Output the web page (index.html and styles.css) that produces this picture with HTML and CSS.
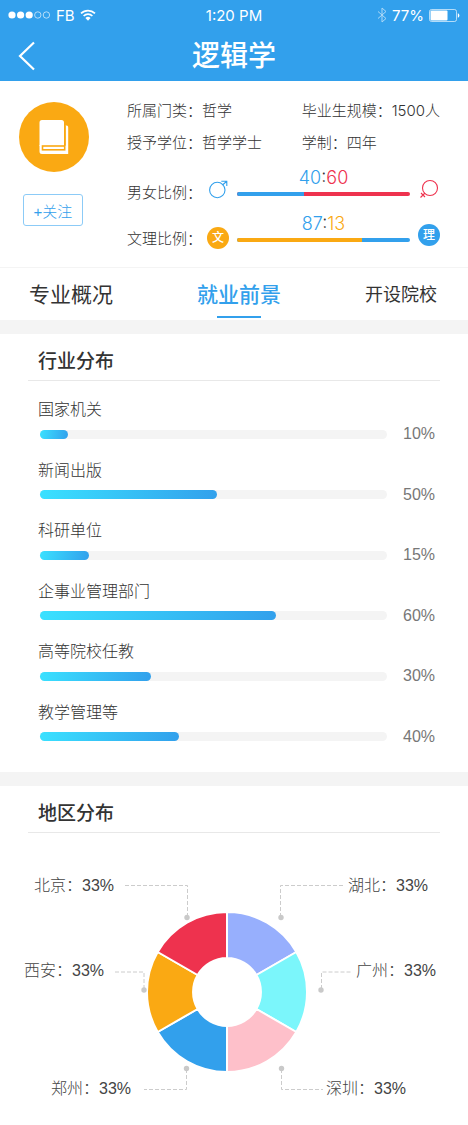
FILE: index.html
```html
<!DOCTYPE html>
<html lang="zh-CN">
<head>
  <meta charset="UTF-8">
  <meta name="viewport" content="width=device-width, initial-scale=1.0">
  <title>逻辑学</title>
  <link rel="stylesheet" href="styles.css">
</head>
<body>
  <header class="header">
    <div class="status-bar">
      <div class="status-left">
        <svg width="43" height="10" viewBox="0 0 43 10" aria-hidden="true">
          <g fill="#fff">
            <circle cx="4" cy="5" r="3.6"/>
            <circle cx="12.6" cy="5" r="3.6"/>
            <circle cx="21.2" cy="5" r="3.6"/>
          </g>
          <g fill="none" stroke="#fff" stroke-width="0.8" opacity="0.8">
            <circle cx="29.8" cy="5" r="3.2"/>
            <circle cx="38.4" cy="5" r="3.2"/>
          </g>
        </svg>
        <span>FB</span>
        <svg width="16" height="12" viewBox="0 0 16 12" aria-hidden="true">
          <g fill="none" stroke="#fff" stroke-width="1.7">
            <path d="M1 4.4a10 10 0 0 1 14 0"/>
            <path d="M3.6 7a6.3 6.3 0 0 1 8.8 0"/>
          </g>
          <path d="M5.4 9a3.7 3.7 0 0 1 5.2 0L8 11.7z" fill="#fff"/>
        </svg>
      </div>
      <span>1:20 PM</span>
      <div class="status-right">
        <svg class="bluetooth" width="10" height="16" viewBox="0 0 10 16" aria-hidden="true">
          <path d="M1 4.5l8 7-4 3.5V1l4 3.5-8 7" fill="none" stroke="#fff" stroke-width="1"/>
        </svg>
        <span>77%</span>
        <svg width="31" height="13" viewBox="0 0 31 13" aria-hidden="true">
          <rect x="0.5" y="0.5" width="27" height="12" rx="2" fill="none" stroke="#fff" stroke-width="0.8" opacity="0.8"/>
          <rect x="1.5" y="1.5" width="17" height="10" rx="1" fill="#fff"/>
          <path d="M28.8 4.3q1.6.5 1.6 2.2t-1.6 2.2z" fill="#fff"/>
        </svg>
      </div>
    </div>
    <div class="title-bar">
      <button type="button" class="back" aria-label="返回">
        <svg width="18" height="30" viewBox="0 0 18 30">
          <path d="M16 1.5L2 15l14 13.5" fill="none" stroke="#fff" stroke-width="2.2"/>
        </svg>
      </button>
      <h1>逻辑学</h1>
    </div>
  </header>

  <!-- Major summary -->
  <section class="profile">
    <div class="profile-side">
      <div class="avatar">
        <svg width="30" height="36" viewBox="0 0 30 36" aria-hidden="true">
          <path d="M3 1H22.500a2.500 2.500 0 0 1 2.500 2.500V27H0.500V3.500A2.500 2.500 0 0 1 3 1z" fill="#fff"/>
          <path d="M0.500 26H26.700V6.500a2 2 0 0 1 2.500 2V35H3a2.500 2.500 0 0 1-2.500-2.500z" fill="#fff"/>
          <rect x="3.500" y="27" width="22.200" height="3.800" fill="#fff" stroke="#faa913" stroke-width="1.600"/>
          <path d="M25.800 7V27" fill="none" stroke="#faa913" stroke-width="1.600"/>
        </svg>
      </div>
      <button type="button" class="follow">+关注</button>
    </div>
    <div class="profile-main">
      <div class="facts">
        <p>所属门类：哲学</p>
        <p>毕业生规模：1500人</p>
        <p>授予学位：哲学学士</p>
        <p>学制：四年</p>
      </div>
      <div class="ratio">
        <span class="ratio-label">男女比例：</span>
        <svg class="ratio-icon low" viewBox="0 0 22 22" aria-hidden="true">
          <g fill="none" stroke="#32a0ec" stroke-width="1.100">
            <circle cx="10.300" cy="9" r="7.700"/>
            <path d="M15.500 4L19.500 0.500M14.300 0.300H19.800V5"/>
          </g>
        </svg>
        <div class="ratio-meter">
          <p><span class="blue">40</span>:<span class="red">60</span></p>
          <div class="ratio-bar bg-red"><div class="bg-blue" style="width: 39%"></div></div>
        </div>
        <svg class="ratio-icon" viewBox="0 0 22 22" aria-hidden="true">
          <g fill="none" stroke="#ee324e" stroke-width="1.100">
            <circle cx="12" cy="10" r="7.500"/>
            <path d="M7 15L2.500 19.500M3 15l4 4"/>
          </g>
        </svg>
      </div>
      <div class="ratio">
        <span class="ratio-label">文理比例：</span>
        <span class="ratio-icon badge low bg-orange">文</span>
        <div class="ratio-meter">
          <p><span class="blue">87</span>:<span class="orange">13</span></p>
          <div class="ratio-bar bg-blue"><div class="bg-orange" style="width: 72%"></div></div>
        </div>
        <span class="ratio-icon badge bg-blue">理</span>
      </div>
    </div>
  </section>

  <nav class="tabs">
    <a href="#">专业概况</a>
    <a href="#" class="active">就业前景</a>
    <a href="#" class="small">开设院校</a>
  </nav>

  <!-- Industries -->
  <section class="panel">
    <h2>行业分布</h2>
    <ul class="industries">
      <li>
        <span class="name">国家机关</span>
        <div class="track"><div class="fill" style="width: 8%"></div></div>
        <span class="percent">10%</span>
      </li>
      <li>
        <span class="name">新闻出版</span>
        <div class="track"><div class="fill" style="width: 51%"></div></div>
        <span class="percent">50%</span>
      </li>
      <li>
        <span class="name">科研单位</span>
        <div class="track"><div class="fill" style="width: 14%"></div></div>
        <span class="percent">15%</span>
      </li>
      <li>
        <span class="name">企事业管理部门</span>
        <div class="track"><div class="fill" style="width: 68%"></div></div>
        <span class="percent">60%</span>
      </li>
      <li>
        <span class="name">高等院校任教</span>
        <div class="track"><div class="fill" style="width: 32%"></div></div>
        <span class="percent">30%</span>
      </li>
      <li>
        <span class="name">教学管理等</span>
        <div class="track"><div class="fill" style="width: 40%"></div></div>
        <span class="percent">40%</span>
      </li>
    </ul>
  </section>

  <!-- Regions -->
  <section class="panel">
    <h2>地区分布</h2>
    <svg class="donut" viewBox="0 0 468 292" role="img" aria-label="地区分布">
      <g transform="translate(227 159)" stroke="#fff" stroke-width="2">
        <path d="M0-80A80 80 0 0 1 69.300-40L29.400-17A34 34 0 0 0 0-34z" fill="#97affd"/>
        <path d="M69.300-40A80 80 0 0 1 69.300 40L29.400 17A34 34 0 0 0 29.400-17z" fill="#7bf6fb"/>
        <path d="M69.300 40A80 80 0 0 1 0 80V34A34 34 0 0 0 29.400 17z" fill="#fec0ca"/>
        <path d="M0 80A80 80 0 0 1-69.300 40L-29.400 17A34 34 0 0 0 0 34z" fill="#32a0ec"/>
        <path d="M-69.300 40A80 80 0 0 1-69.300-40L-29.400-17A34 34 0 0 0-29.400 17z" fill="#faa913"/>
        <path d="M-69.300-40A80 80 0 0 1 0-80V-34A34 34 0 0 0-29.400-17z" fill="#ee324e"/>
      </g>
      <g class="leaders">
        <path d="M187.500 84V52.500H124"/>
        <path d="M144 156V139H113"/>
        <path d="M186.500 236V256.500H144"/>
        <path d="M280.500 84V52.500H344"/>
        <path d="M321.500 156V139H352"/>
        <path d="M281.500 236V256.500H323"/>
      </g>
      <g fill="#c9c9c9">
        <circle cx="187" cy="84.500" r="2.700"/>
        <circle cx="144" cy="157" r="2.700"/>
        <circle cx="186.500" cy="235.500" r="2.700"/>
        <circle cx="281" cy="84.500" r="2.700"/>
        <circle cx="321" cy="157" r="2.700"/>
        <circle cx="281.500" cy="235.500" r="2.700"/>
      </g>
      <g class="regions">
        <text x="34" y="58">北京：33%</text>
        <text x="24" y="143">西安：33%</text>
        <text x="51" y="261">郑州：33%</text>
        <text x="348" y="58">湖北：33%</text>
        <text x="356" y="143">广州：33%</text>
        <text x="326" y="261">深圳：33%</text>
      </g>
    </svg>
  </section>
</body>
</html>
```

FILE: styles.css
```css
* {
  box-sizing: border-box;
}

body {
  margin: 0;
  background: #fff;
  color: #333;
  font-family: "Liberation Sans", "Noto Sans CJK SC", sans-serif;
  font-size: 16px;
  font-weight: 300;
}

h1, h2, p, ul {
  margin: 0;
  padding: 0;
}

svg {
  display: block;
}

button {
  font-family: inherit;
  cursor: pointer;
}

.header {
  background: #32a0ec;
  color: #fff;
}

.status-bar {
  display: grid;
  grid-template-columns: 1fr auto 1fr;
  align-items: center;
  height: 30px;
  padding: 0 8px;
  font-family: Inter, sans-serif;
  font-size: 15px;
  font-weight: 400;
}

.status-left, .status-right {
  display: flex;
  align-items: center;
  gap: 5px;
}

.status-right {
  justify-content: flex-end;
}

.bluetooth {
  opacity: 0.6;
}

.title-bar {
  display: grid;
  grid-template-columns: 36px 1fr 36px;
  align-items: center;
  height: 51px;
  padding: 0 18px;
}

.back {
  padding: 0;
  border: none;
  background: none;
}

.title-bar h1 {
  padding-top: 3px;
  font-size: 28px;
  font-weight: 500;
  line-height: 40px;
  text-align: center;
}

/* Profile */
.profile {
  display: flex;
  padding: 20px 28px 18px 19px;
  border-bottom: 1px solid #f4f4f4;
}

.profile-side {
  flex: 0 0 108px;
}

.avatar {
  display: flex;
  align-items: center;
  justify-content: center;
  width: 70px;
  height: 70px;
  margin-top: 1px;
  border-radius: 50%;
  background: #faa913;
}

.follow {
  width: 60px;
  height: 32px;
  margin: 22px 0 0 4px;
  padding: 0;
  border: 1px solid #8ccbf7;
  border-radius: 3px;
  background: #fff;
  color: #32a0ec;
  font-size: 15px;
  font-weight: 300;
}

.profile-main {
  flex: 1;
  font-family: Inter, "Noto Sans CJK SC", sans-serif;
  font-size: 15px;
  line-height: 20px;
}

.facts {
  display: grid;
  grid-template-columns: 1fr auto;
  row-gap: 12px;
  padding-bottom: 15px;
  white-space: nowrap;
}

.ratio {
  display: flex;
  height: 35px;
  margin-bottom: 11px;
}

.ratio:last-child {
  margin-bottom: 0;
}

.ratio-label {
  width: 80px;
  align-self: flex-end;
}

.ratio-icon {
  width: 22px;
  height: 22px;
  margin-top: 10px;
  overflow: visible;
}

.low {
  align-self: flex-end;
}

.badge {
  border-radius: 50%;
  color: #fff;
  font-size: 12px;
  font-weight: 500;
  line-height: 22px;
  text-align: center;
}

.ratio-meter {
  flex: 1;
  margin: 0 8px;
}

.ratio-meter p {
  font-size: 18px;
  text-align: center;
}

.ratio-bar {
  height: 4px;
  margin-top: 4px;
  border-radius: 2px;
  overflow: hidden;
}

.ratio-bar div {
  height: 100%;
}

.blue { color: #32a0ec; }
.red { color: #ee324e; }
.orange { color: #faa913; }
.bg-blue { background: #32a0ec; }
.bg-red { background: #ee324e; }
.bg-orange { background: #faa913; }

/* Tabs */
.tabs {
  display: flex;
  justify-content: space-between;
  height: 52px;
  padding: 0 31px 0 29px;
}

.tabs a {
  position: relative;
  color: #333;
  font-size: 21px;
  font-weight: 400;
  line-height: 54px;
  text-decoration: none;
}

.tabs .small {
  font-size: 18px;
}

.tabs .active {
  color: #32a0ec;
  font-weight: 500;
}

.tabs .active::after {
  content: "";
  position: absolute;
  bottom: 2px;
  left: 50%;
  width: 44px;
  height: 2px;
  margin-left: -22px;
  background: #32a0ec;
}

/* Panels */
.panel {
  padding: 0 28px;
  border-top: 14px solid #f4f4f4;
}

.panel h2 {
  height: 47px;
  padding-left: 10px;
  border-bottom: 1px solid #e8e8e8;
  color: #333;
  font-size: 19px;
  font-weight: 500;
  line-height: 56px;
}

.industries {
  display: grid;
  align-content: space-between;
  min-height: 391px;
  padding: 16px 5px 24px 10px;
  list-style: none;
}

.industries li {
  display: grid;
  grid-template-columns: 1fr 32px;
  column-gap: 16px;
  align-items: center;
}

.name {
  grid-column: 1 / 3;
  line-height: 26px;
}

.track {
  height: 9px;
  margin-left: 2px;
  border-radius: 5px;
  background: #f4f4f4;
}

.fill {
  height: 100%;
  border-radius: 5px;
  background: linear-gradient(100deg, #3ae1ff, #32a0ec);
}

.percent {
  color: #777;
  line-height: 22px;
  text-align: right;
}

.donut {
  width: calc(100% + 56px);
  margin: 0 -28px;
}

.leaders {
  fill: none;
  stroke: #ccc;
  stroke-width: 1;
  stroke-dasharray: 4 2;
}

.regions {
  fill: #444;
  font-size: 16px;
}
```
